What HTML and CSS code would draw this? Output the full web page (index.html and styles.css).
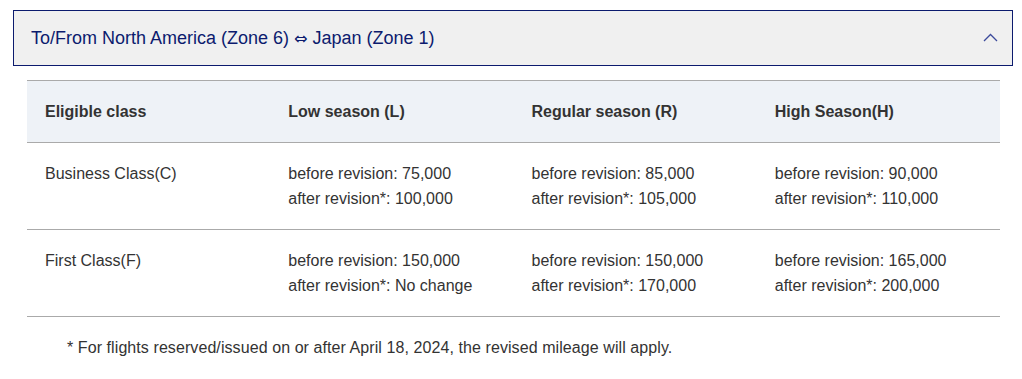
FILE: index.html
```html
<!DOCTYPE html>
<html>
<head>
<meta charset="utf-8">
<link rel="stylesheet" href="styles.css">
</head>
<body>
<div class="page">
  <div class="acc-head">
    <span class="acc-title">To/From North America (Zone 6) <span class="arrow">⇔</span> Japan (Zone 1)</span>
    <svg class="chev" width="15" height="9" viewBox="0 0 15 9"><path d="M1 8 L7.5 1.5 L14 8" fill="none" stroke="#3b4a9b" stroke-width="1.3"/></svg>
  </div>
  <div class="acc-body">
    <table class="miles">
      <thead>
        <tr><th>Eligible class</th><th>Low season (L)</th><th>Regular season (R)</th><th>High Season(H)</th></tr>
      </thead>
      <tbody>
        <tr>
          <td>Business Class(C)</td>
          <td>before revision: 75,000<br>after revision*: 100,000</td>
          <td>before revision: 85,000<br>after revision*: 105,000</td>
          <td>before revision: 90,000<br>after revision*: 110,000</td>
        </tr>
        <tr>
          <td>First Class(F)</td>
          <td>before revision: 150,000<br>after revision*: No change</td>
          <td>before revision: 150,000<br>after revision*: 170,000</td>
          <td>before revision: 165,000<br>after revision*: 200,000</td>
        </tr>
      </tbody>
    </table>
    <p class="note">* For flights reserved/issued on or after April 18, 2024, the revised mileage will apply.</p>
  </div>
</div>
</body>
</html>
```
FILE: styles.css
```css
html, body { margin: 0; padding: 0; background: #fff; }
body { font-family: "Liberation Sans", Arial, Helvetica, sans-serif; }
.page { padding: 10px 9px 0 13px; }
.acc-head {
  height: 54px;
  border: 1px solid #0c1b6e;
  background: #f0f0f0;
  display: flex;
  align-items: center;
  justify-content: space-between;
  padding: 0 14px 0 17px;
  box-sizing: content-box;
  width: 967px;
}
.acc-title { color: #0c1b6e; font-size: 18px; line-height: 20px; }
.arrow { font-family: "DejaVu Sans", sans-serif; font-size: 16px; }
.chev { display: block; margin-top: -2px; }
.acc-body { padding: 14px 0 0 14px; width: 973px; }
.miles {
  width: 973px;
  border-collapse: collapse;
  table-layout: fixed;
  font-size: 16px;
  line-height: 25px;
  color: #333;
}
.miles th, .miles td {
  text-align: left;
  vertical-align: top;
  padding: 18px 18px;
}
.miles th { font-weight: bold; background: #eef2f7; border-top: 1px solid #aaa; border-bottom: 1px solid #aaa; }
.miles td { border-bottom: 1px solid #aaa; }
.note { margin: 0; padding: 18px 0 0 40px; font-size: 16px; line-height: 25px; color: #333; letter-spacing: 0.08px; }
```
